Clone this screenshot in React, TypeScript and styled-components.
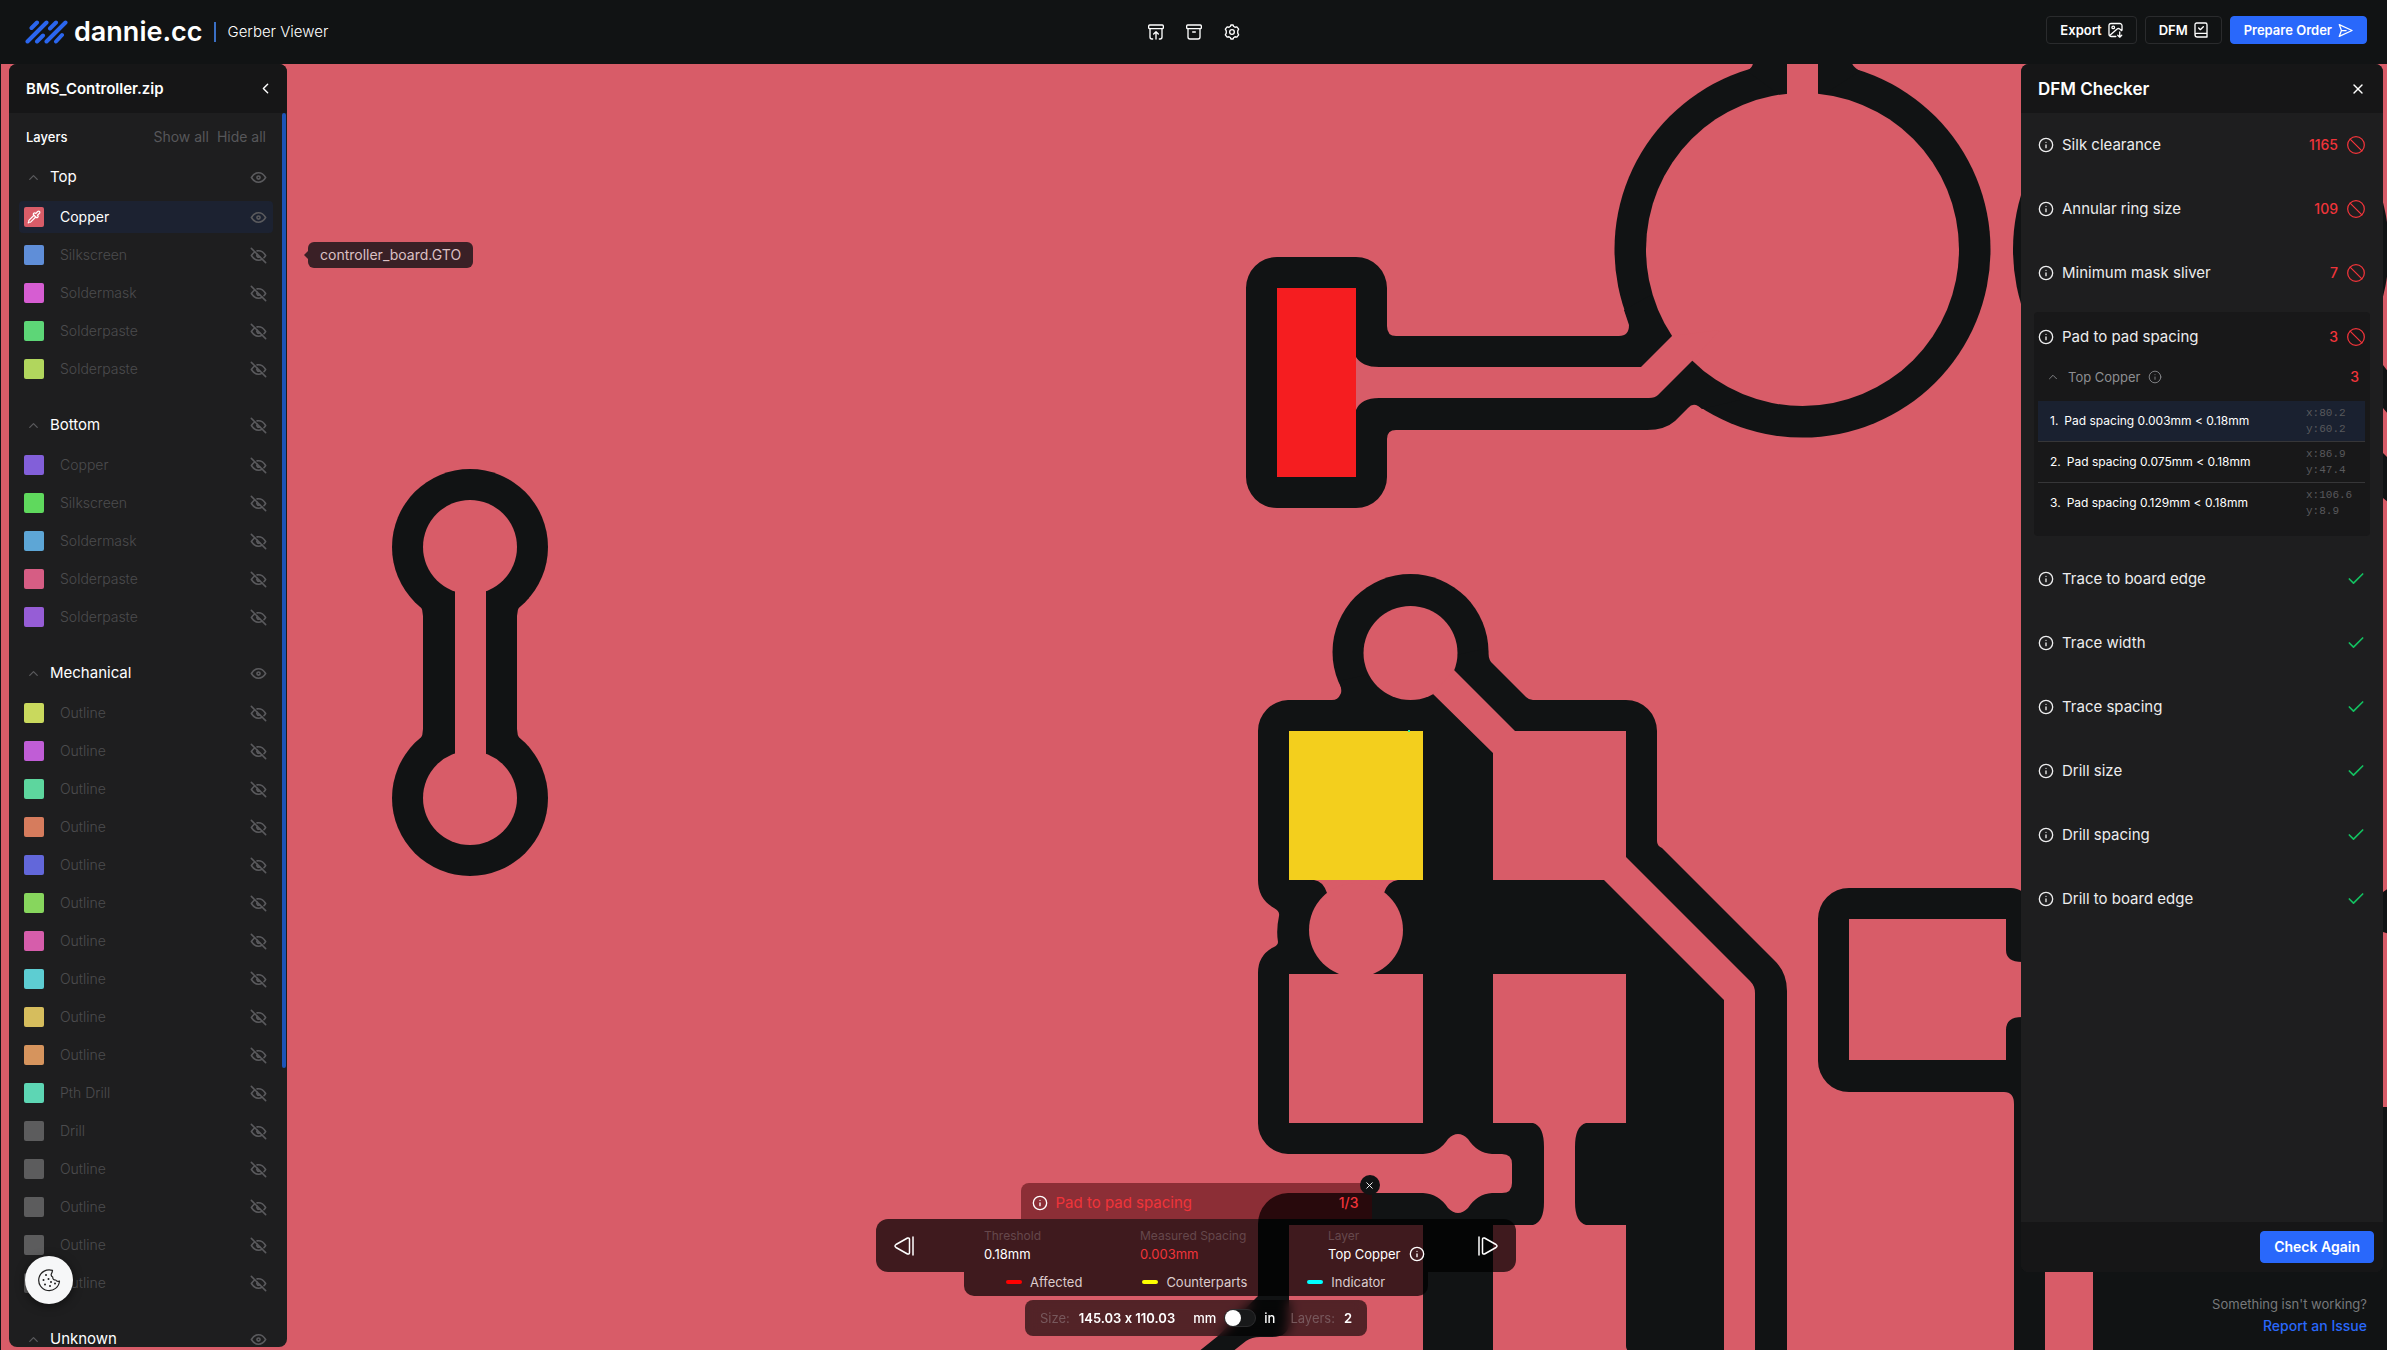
import React, { useState } from "react";
import styled, { createGlobalStyle } from "styled-components";
import { Ban, Check, ChevronLeft, ChevronUp, Info, Pipette, X } from "lucide-react";
import { TbEye, TbEyeOff } from "react-icons/tb";

const color = {
  ink: "#111314",
  copper: "#d85c68",
  panel: "#1e1e1f",
  panelHead: "#161617",
  blue: "#2968fb",
  red: "#f0343a",
  green: "#13c060",
  dim: "#4c4c4e",
};

const GlobalStyle = createGlobalStyle`
  *, *::before, *::after { box-sizing: border-box; }
  body {
    margin: 0;
    overflow: hidden;
    background: ${color.ink};
    color: #fff;
    font-family: Inter, "Liberation Sans", sans-serif;
    font-size: 14px;
    font-feature-settings: "calt" 0;
    line-height: 20px;
  }
  button {
    margin: 0;
    padding: 0;
    border: 0;
    background: none;
    color: inherit;
    font: inherit;
    cursor: pointer;
  }
  h1, h2, h3, p, ul, ol, dl, dd { margin: 0; padding: 0; font: inherit; }
  ul, ol { list-style: none; }
  svg { display: block; flex: none; }
`;

const Page = styled.div`
  display: grid;
  grid-template-rows: 64px minmax(0, 1fr);
  height: 100vh;
`;

/* ---------- top bar ---------- */

const TopBar = styled.header`
  display: grid;
  grid-template-columns: 1fr auto 1fr;
  align-items: center;
  padding: 0 20px;
  background: ${color.ink};
`;

const Brand = styled.a`
  display: flex;
  align-items: center;
  padding-left: 5px;
  color: #fff;
  text-decoration: none;
`;

const BrandName = styled.span`
  margin-left: 6px;
  font-size: 27px;
  line-height: 32px;
  font-weight: 600;
`;

const Product = styled.span`
  margin-left: 11px;
  padding-left: 12px;
  border-left: 2px solid #3a6fc4;
  font-size: 15px;
  font-weight: 300;
`;

const ToolGroup = styled.nav`
  display: flex;
  gap: 22px;
`;

const Actions = styled.div`
  display: flex;
  justify-content: flex-end;
  gap: 8px;
  padding-bottom: 4px;
`;

const ActionButton = styled.button<{ $primary?: boolean; $large?: boolean }>`
  display: flex;
  align-items: center;
  gap: 6px;
  height: ${(p) => (p.$large ? 32 : 28)}px;
  padding: 0 13px;
  border: 1px solid ${(p) => (p.$primary ? color.blue : "#2a2b2d")};
  border-radius: 4px;
  background: ${(p) => (p.$primary ? color.blue : "transparent")};
  font-size: ${(p) => (p.$large ? 14 : 13)}px;
  font-weight: 600;
`;

/* ---------- work area ---------- */

const Workspace = styled.main`
  display: grid;
  min-height: 0;
  overflow: hidden;
  & > * { grid-area: 1 / 1; }
`;

const Board = styled.svg`
  width: 100%;
  height: 100%;
  min-height: 0;
`;

const Panel = styled.aside`
  z-index: 1;
  display: grid;
  grid-template-rows: 49px minmax(0, 1fr);
  min-height: 0;
  overflow: hidden;
  border-radius: 8px;
  background: ${color.panel};
`;

const LayerPanel = styled(Panel)`
  justify-self: start;
  width: 278px;
  margin: 0 0 3px 9px;
`;

const PanelHead = styled.div<{ $narrow?: boolean }>`
  display: flex;
  align-items: center;
  justify-content: space-between;
  padding: 0 ${(p) => (p.$narrow ? 13 : 17)}px 0 17px;
  background: ${color.panelHead};
`;

const PanelTitle = styled.h2<{ $large?: boolean }>`
  font-size: ${(p) => (p.$large ? 17 : 15)}px;
  font-weight: 600;
`;

const ScrollArea = styled.div`
  display: grid;
  grid-template-columns: minmax(0, 1fr) 5px;
  min-height: 0;
`;

const ScrollThumb = styled.div`
  width: 4px;
  height: 955px;
  border-radius: 2px;
  background: #1d54b8;
`;

const LayerList = styled.div`
  display: flex;
  flex-direction: column;
  gap: 22px;
  min-height: 0;
  overflow: hidden;
  padding: 14px 9px 0 10px;
`;

const LayerTools = styled.div`
  display: flex;
  align-items: center;
  gap: 8px;
  height: 20px;
  margin-bottom: -10px;
  padding: 0 7px;
`;

const LayersTitle = styled.h3`
  flex: 1;
  font-size: 13px;
  font-weight: 500;
`;

const QuietButton = styled.button`
  color: #57575a;
`;

const GroupHead = styled.div`
  display: flex;
  align-items: center;
  height: 36px;
  padding: 0 5px 0 7px;
  margin-bottom: 6px;
`;

const GroupToggle = styled.button`
  display: flex;
  flex: 1;
  align-items: center;
  gap: 9px;
  font-size: 15px;
  svg { color: #5a5a5d; }
`;

const Rows = styled.ul`
  display: flex;
  flex-direction: column;
  gap: 6px;
`;

const Row = styled.li<{ $active: boolean }>`
  display: flex;
  align-items: center;
  gap: 16px;
  height: 32px;
  padding: 0 5px;
  border-radius: 4px;
  background: ${(p) => (p.$active ? "#1c2231" : "transparent")};
  color: ${(p) => (p.$active ? "#fff" : color.dim)};
  font-weight: ${(p) => (p.$active ? 400 : 300)};
`;

const Swatch = styled.button<{ $fill: string }>`
  display: grid;
  place-items: center;
  width: 20px;
  height: 20px;
  border-radius: 2px;
  background: ${(p) => p.$fill};
`;

const RowName = styled.span`
  flex: 1;
`;

const EyeButton = styled.button`
  color: #5a5a5d;
`;

const FileTip = styled.div`
  z-index: 1;
  justify-self: start;
  align-self: start;
  display: flex;
  align-items: center;
  height: 26px;
  margin: 178px 0 0 308px;
  padding: 0 12px;
  border-radius: 6px;
  background: #3a2026;
  color: #dcc0c4;
  position: relative;
  &::before {
    content: "";
    position: absolute;
    left: -4px;
    top: 9px;
    border: 4px solid transparent;
    border-left-width: 0;
    border-right-color: #3a2026;
  }
`;

const CookieButton = styled.button`
  z-index: 2;
  justify-self: start;
  align-self: end;
  display: grid;
  place-items: center;
  width: 48px;
  height: 48px;
  margin: 0 0 46px 25px;
  border-radius: 50%;
  background: #f6f7f8;
  color: #222;
  box-shadow: 0 2px 10px rgba(0, 0, 0, 0.5);
`;

/* ---------- DFM panel ---------- */

const RightColumn = styled.div`
  z-index: 1;
  justify-self: end;
  display: grid;
  grid-template-rows: minmax(0, 1fr) 78px;
  width: 362px;
  min-height: 0;
  margin-right: 4px;
`;

const DfmPanel = styled(Panel)`
  grid-template-rows: 49px minmax(0, 1fr) 50px;
`;

const Checks = styled.ul`
  display: flex;
  flex-direction: column;
  gap: 14px;
  padding: 7px 13px;
`;

const CheckItem = styled.li<{ $open: boolean }>`
  padding-bottom: ${(p) => (p.$open ? 12 : 0)}px;
  margin-bottom: ${(p) => (p.$open ? 4 : 0)}px;
  border-radius: 4px;
  background: ${(p) => (p.$open ? "#181819" : "transparent")};
`;

const CheckHead = styled.button`
  display: flex;
  align-items: center;
  gap: 8px;
  width: 100%;
  height: 50px;
  padding: 0 4px;
  color: #ededee;
  font-size: 15px;
  text-align: left;
`;

const CheckName = styled.span`
  flex: 1;
`;

const Count = styled.span`
  color: ${color.red};
  font-size: 14px;
  font-weight: 500;
`;

const Status = styled.span<{ $ok: boolean }>`
  color: ${(p) => (p.$ok ? color.green : color.red)};
`;

const SubHead = styled.button`
  display: flex;
  align-items: center;
  gap: 8px;
  width: 100%;
  height: 30px;
  padding: 0 11px 0 12px;
  color: #8d8e91;
  font-size: 13px;
  text-align: left;
  ${Count} { flex: 1; text-align: right; }
`;

const Violations = styled.ol`
  padding: 9px 5px 0 4px;
`;

const Violation = styled.li<{ $active: boolean }>`
  display: flex;
  align-items: center;
  gap: 6px;
  height: 41px;
  padding: 0 0 0 12px;
  border-bottom: 1px solid #363638;
  background: ${(p) => (p.$active ? "#1a2130" : "transparent")};
  font-size: 12px;
  &:last-child { border-bottom-color: transparent; }
`;

const ViolationText = styled.span`
  flex: 1;
`;

const Coords = styled.span`
  width: 59px;
  color: #58595c;
  font-family: "Liberation Mono", monospace;
  font-size: 11px;
  line-height: 16px;
`;

const PanelFoot = styled.div`
  display: flex;
  align-items: center;
  justify-content: flex-end;
  padding-right: 9px;
  background: ${color.panelHead};
`;

const Help = styled.div`
  padding: 21px 16px 0 0;
  line-height: 22px;
  text-align: right;
  p { color: #77797b; font-size: 13px; }
  a { color: ${color.blue}; font-weight: 500; text-decoration: none; }
`;

/* ---------- bottom readouts ---------- */

const Hud = styled.section`
  z-index: 1;
  justify-self: center;
  align-self: end;
  display: flex;
  flex-direction: column;
  align-items: center;
  margin: 0 0 14px 5px;
`;

const HudTitle = styled.div`
  position: relative;
  display: flex;
  align-items: center;
  gap: 8px;
  width: 351px;
  height: 36px;
  padding: 3px 13px 0 11px;
  border-radius: 8px 8px 0 0;
  background: rgba(64, 0, 4, 0.5);
  font-size: 15px;
`;

const HudName = styled.h2`
  flex: 1;
  color: ${color.red};
`;

const CloseBadge = styled.button`
  position: absolute;
  right: -8px;
  top: -8px;
  display: grid;
  place-items: center;
  width: 20px;
  height: 20px;
  border-radius: 50%;
  background: ${color.ink};
`;

const HudNav = styled.div`
  display: flex;
  align-items: center;
  gap: 51px;
  width: 640px;
  height: 53px;
  padding: 0 18px;
  border-radius: 12px;
  background: rgba(0, 0, 0, 0.71);
`;

const Facts = styled.dl`
  display: grid;
  grid-template-columns: 156px 188px 1fr;
  flex: 1;
  padding: 0 0 2px 19px;
  font-size: 13px;
  line-height: 18px;
`;

const FactName = styled.dt`
  color: #66484c;
  font-size: 12px;
`;

const FactValue = styled.dd<{ $alert?: boolean }>`
  display: flex;
  align-items: center;
  gap: 9px;
  white-space: nowrap;
  color: ${(p) => (p.$alert ? color.red : "#fff")};
`;

const Legend = styled.ul`
  display: flex;
  align-items: center;
  gap: 60px;
  width: 464px;
  height: 24px;
  padding: 0 0 4px 42px;
  border-radius: 0 0 10px 10px;
  background: rgba(0, 0, 0, 0.71);
  color: #dccccd;
  font-size: 13px;
`;

const LegendItem = styled.li<{ $mark: string }>`
  display: flex;
  align-items: center;
  gap: 8px;
  &::before {
    content: "";
    width: 16px;
    height: 4px;
    border-radius: 2px;
    background: ${(p) => p.$mark};
  }
`;

const StatusBar = styled.div`
  display: flex;
  align-items: center;
  gap: 9px;
  height: 36px;
  margin-top: 4px;
  padding: 0 15px;
  border-radius: 8px;
  background: rgba(0, 0, 0, 0.62);
  backdrop-filter: blur(6px);
  font-size: 13px;
`;

const StatusLabel = styled.span`
  color: #77585c;
`;

const Dimensions = styled.strong`
  margin-right: 9px;
  font-weight: 600;
`;

const StatusValue = styled.strong`
  font-weight: 600;
`;

const UnitLabel = styled.label`
  display: flex;
  align-items: center;
  gap: 8px;
  margin-right: 6px;
  font-weight: 500;
`;

const UnitSwitch = styled.input`
  appearance: none;
  display: flex;
  width: 32px;
  height: 18px;
  margin: 0;
  border: 1px solid #2c2c2e;
  border-radius: 9px;
  background: #18191a;
  &::before {
    content: "";
    width: 16px;
    height: 16px;
    border-radius: 50%;
    background: #fff;
  }
  &:checked { justify-content: flex-end; }
`;

/* ---------- drawings ---------- */

const BrandMark = () => (
  <svg width="43" height="24" viewBox="0 0 43 24" fill="none" stroke="#2b66ee" strokeWidth="4" strokeLinecap="round">
    <path d="M6.500 8 12 2.500M2.500 21.500 21.500 2.500M12 21.500 18 15.500M25 8.500 31 2.500M21.500 21.500 40.500 2.500M31 21.500 37 15" />
  </svg>
);

const strokeIcon = {
  fill: "none",
  stroke: "currentColor",
  strokeWidth: 2,
  strokeLinecap: "round" as const,
  strokeLinejoin: "round" as const,
};

const ArchiveUp = () => (
  <svg width="16" height="16" viewBox="0 0 24 24" {...strokeIcon}>
    <rect x="1" y="1.500" width="22" height="5.500" rx="1.500" />
    <path d="M3 7v12.500a3 3 0 0 0 3 3h1M21 7v12.500a3 3 0 0 1-3 3h-1M12 22.500V12M8.500 15l3.500-3.500 3.500 3.500" />
  </svg>
);

const ArchiveBox = () => (
  <svg width="16" height="16" viewBox="0 0 24 24" {...strokeIcon}>
    <rect x="1" y="1.500" width="22" height="5.500" rx="1.500" />
    <path d="M3 7v12.500a3 3 0 0 0 3 3h12a3 3 0 0 0 3-3V7M10 12h4" />
  </svg>
);

const Gear = () => (
  <svg width="16" height="16" viewBox="0 0 24 24" {...strokeIcon}>
    <path d="M9.700 3.300 10.300 1.500h3.400l.6 1.800 2.200 1.600 2.800-.5 2.700 3.400-1.400 2.500v3.400l1.400 2.500-2.700 3.400-2.800-.5-2.200 1.600-.6 1.800h-3.400l-.6-1.800-2.200-1.600-2.800.5L2 16.200l1.400-2.500v-3.400L2 7.800l2.700-3.400 2.800.5z" />
    <circle cx="12" cy="12" r="3.500" />
  </svg>
);

const ExportIcon = () => (
  <svg width="15" height="16" viewBox="0 0 23 24" {...strokeIcon}>
    <path d="M12 22H5a3.500 3.500 0 0 1-3.500-3.500v-13A3.500 3.500 0 0 1 5 2h13a3.500 3.500 0 0 1 3.500 3.500V12M3 20 14 10.500q2-1.500 4 0l3 2.500M18 15v8M15 20l3 3 3-3" />
    <circle cx="8" cy="8" r="2" />
  </svg>
);

const ReportIcon = () => (
  <svg width="14" height="16" viewBox="0 0 21 24" {...strokeIcon}>
    <path d="M1.500 19V4a2.500 2.500 0 0 1 2.500-2.500h13A2.500 2.500 0 0 1 19.500 4v18.500H5A3.500 3.500 0 0 1 1.500 19 2.500 2.500 0 0 1 4 17h15M7 9l2.500 2.500L14 7" />
  </svg>
);

const SendIcon = () => (
  <svg width="15" height="15" viewBox="0 0 24 24" {...strokeIcon}>
    <path d="M2 2.500 22.500 12 2 21.500 5.500 12zM5.500 12H13" />
  </svg>
);

const StepIcon = ({ back }: { back?: boolean }) => (
  <svg width="20" height="20" viewBox="0 0 20 20" {...strokeIcon} strokeWidth={1.500}>
    <path
      d={
        back
          ? "M19 1v18M15.500 3.500v13q0 2-2 1.500L2 11.500q-2-1.500 0-3L13.500 2q2-.5 2 1.500z"
          : "M1 1v18M4.500 3.500v13q0 2 2 1.500l11.500-6.500q2-1.500 0-3L6.500 2q-2-.5-2 1.500z"
      }
    />
  </svg>
);

const CookieIcon = () => (
  <svg width="24" height="24" viewBox="0 0 24 24" {...strokeIcon} strokeWidth={1.200}>
    <path d="M15.500 2.400A10.400 10.400 0 1 0 22.500 13q-2.500 1.200-3.800-1-3 .2-3-3-2-1-1.400-3 1-1.700 1.200-3.600z" />
    <path
      strokeWidth="2"
      d="M9 7h.01M6.500 12h.01M11.500 11h.01M8 16.500h.01M13 18h.01M14 14h.01M18 15.500h.01"
    />
  </svg>
);

const Artwork = () => (
  <Board aria-label="Top copper artwork">
    <rect width="100%" height="100%" fill={color.copper} />
    <g transform="translate(0 -64)">
      <g fill={color.ink}>
        <rect width="1" height="1350" />
        {/* dumbbell clearance */}
        <circle cx="470" cy="547" r="78" />
        <circle cx="470" cy="798" r="78" />
        <path d="M412 598q11 6 11 18V729q0 12-11 18H529q-12-6-12-18V616q0-12 12-18z" />
        {/* round pad clearance with its trace */}
        <circle cx="1802.500" cy="249.500" r="188" />
        <circle cx="2201" cy="249.500" r="188" />
        <path d="M1753 60q1 7-6 11L1800 110 1860 71q-8-4-9-11z" />
        <path d="M1277 257h79a31 31 0 0 1 31 31V326q0 10 9 10H1619q10 0 10-11L1624 310 1660 290 1740 400 1702 409q-8-8-14-1L1675 421Q1665 430 1647 430H1396q-9 0-9 9V477a31 31 0 0 1-31 31h-79a31 31 0 0 1-31-31V288a31 31 0 0 1 31-31z" />
        {/* pad cluster clearance */}
        <circle cx="1410.500" cy="652" r="78" />
        <path d="M1339 681q4 11 1 14-2 5-8 5H1288a31 31 0 0 0-30 31V880q0 19 16 28 6 3 5 8-3 14-1 26 0 3-4 5-16 8-16 26V1122a31 31 0 0 0 30 32H1423q16-1 25-15 10-10 20 0 9 14 24 15h10q10 0 10 10v19q0 10-10 10h-10q-15 1-24 15-10 10-20 0-9-14-25-15H1288a31 31 0 0 0-30 32V1296L1218 1336 1198 1352H1232L1246 1341Q1252 1337 1260 1337H1272Q1289 1337 1289 1322V1225H1423V1352H1493V1225H1533Q1544 1222 1544 1202V1147Q1544 1126 1533 1123H1586Q1575 1126 1575 1147V1202Q1575 1222 1586 1225H1626V1346q0 5 5 6H1787V991Q1787 972 1774 960L1662 848Q1657 846 1657 841V731a31 31 0 0 0-31-31H1533q-4 0-7-3L1491 662Q1488 658 1488 648z" />
        {/* square pad clearance */}
        <path d="M1849 888H2011q6 0 12 4V1352H2014V1104q0-12-10-12H1849a31 31 0 0 1-31-31V919a31 31 0 0 1 31-31z" />
        <path d="M2014 1104H2400V1352H2014z" />
        <path d="M2383 365l6 8v42l-6-7zM2383 453l6 6v44l-6-5zM2383 892l6-4v46l-6-2z" />
      </g>

      <g fill={color.copper}>
        <circle cx="470" cy="547" r="47" />
        <circle cx="470" cy="798" r="47" />
        <rect x="455" y="580" width="31" height="190" />
        <circle cx="1802.500" cy="249.500" r="156.500" />
        <rect x="1787" y="60" width="31" height="60" />
        <path d="M1356 357Q1362 367 1379 367H1641L1672 336 1720 330 1692 361 1658 395Q1655 398 1649 398H1379Q1361 398 1356 410z" />
        <circle cx="1410.500" cy="653" r="47" />
        <path d="M1454 670 1515 731H1626V857L1750 981Q1755 986 1755 993V1352H1724V1000L1604 880H1493V753L1433 694z" />
        <path d="M1314 880H1398Q1388 881 1384 893L1370 905H1341L1327 893Q1323 881 1314 880z" />
        <circle cx="1356" cy="930" r="47" />
        <rect x="1289" y="974" width="134" height="149" />
        <path d="M1493 974h133v149H1493z" />
        <rect x="1849" y="919" width="157" height="141" />
        <path d="M2000 962Q2006 950 2006 950 2006 962 2022 962V1017Q2006 1017 2006 1030L2000 1017z" />
        <rect x="2045" y="1260" width="48" height="92" />
        <rect x="2383" y="940" width="8" height="167" />
      </g>
      <rect x="1277" y="288" width="79" height="189" fill="#f51d20" />
      <rect x="1289" y="731" width="134" height="149" fill="#f3cf1d" />
      <rect x="1408" y="730" width="2" height="2" fill="#35f0a0" />
    </g>
  </Board>
);

/* ---------- data ---------- */

type Layer = [name: string, fill: string];

const outlineFills = ["#c9d95d", "#c05dd6", "#5dd69e", "#d67c5d", "#6267da", "#87d65d", "#d65dab", "#5dcdd2", "#d6bd5d", "#d6945d"];

const groups: { name: string; visible: boolean; layers: Layer[] }[] = [
  {
    name: "Top",
    visible: true,
    layers: [
      ["Copper", "#d85c68"],
      ["Silkscreen", "#5f8ed8"],
      ["Soldermask", "#d65dd2"],
      ["Solderpaste", "#5dd677"],
      ["Solderpaste", "#b1d65d"],
    ],
  },
  {
    name: "Bottom",
    visible: false,
    layers: [
      ["Copper", "#825fd9"],
      ["Silkscreen", "#5fd95d"],
      ["Soldermask", "#5da6d6"],
      ["Solderpaste", "#d65d84"],
      ["Solderpaste", "#965dd6"],
    ],
  },
  {
    name: "Mechanical",
    visible: true,
    layers: [
      ...outlineFills.map((fill): Layer => ["Outline", fill]),
      ["Pth Drill", "#5dd6b4"],
      ["Drill", "#5c5c5d"],
      ["Outline", "#5c5c5d"],
      ["Outline", "#5c5c5d"],
      ["Outline", "#5c5c5d"],
      ["Outline", "#5c5c5d"],
    ],
  },
  { name: "Unknown", visible: true, layers: [] },
];

const checks = [
  { name: "Silk clearance", count: 1165 },
  { name: "Annular ring size", count: 109 },
  { name: "Minimum mask sliver", count: 7 },
  { name: "Pad to pad spacing", count: 3 },
  { name: "Trace to board edge", count: 0 },
  { name: "Trace width", count: 0 },
  { name: "Trace spacing", count: 0 },
  { name: "Drill size", count: 0 },
  { name: "Drill spacing", count: 0 },
  { name: "Drill to board edge", count: 0 },
];

const violations = [
  { gap: "0.003mm", x: "80.2", y: "60.2" },
  { gap: "0.075mm", x: "86.9", y: "47.4" },
  { gap: "0.129mm", x: "106.6", y: "8.9" },
];

const Eye = ({ on, label }: { on: boolean; label: string }) => (
  <EyeButton aria-label={`Toggle ${label}`}>{on ? <TbEye size={19} /> : <TbEyeOff size={19} />}</EyeButton>
);

export default function App() {
  const [inches, setInches] = useState(false);
  const openCheck = "Pad to pad spacing";

  return (
    <>
      <GlobalStyle />
      <Page>
        <TopBar>
          <Brand href="#">
            <BrandMark />
            <BrandName>dannie.cc</BrandName>
            <Product>Gerber Viewer</Product>
          </Brand>
          <ToolGroup aria-label="Project">
            <button aria-label="Upload archive"><ArchiveUp /></button>
            <button aria-label="Archive"><ArchiveBox /></button>
            <button aria-label="Settings"><Gear /></button>
          </ToolGroup>
          <Actions>
            <ActionButton>Export <ExportIcon /></ActionButton>
            <ActionButton>DFM <ReportIcon /></ActionButton>
            <ActionButton $primary>Prepare Order <SendIcon /></ActionButton>
          </Actions>
        </TopBar>

        <Workspace>
          <Artwork />

          <LayerPanel>
            <PanelHead $narrow>
              <PanelTitle>BMS_Controller.zip</PanelTitle>
              <button aria-label="Collapse layers"><ChevronLeft size={17} strokeWidth={2} /></button>
            </PanelHead>
            <ScrollArea>
              <LayerList>
                <LayerTools>
                  <LayersTitle>Layers</LayersTitle>
                  <QuietButton>Show all</QuietButton>
                  <QuietButton>Hide all</QuietButton>
                </LayerTools>
                {groups.map((group) => (
                  <section key={group.name}>
                    <GroupHead>
                      <GroupToggle>
                        <ChevronUp size={15} /> {group.name}
                      </GroupToggle>
                      <Eye on={group.visible} label={group.name} />
                    </GroupHead>
                    <Rows>
                      {group.layers.map(([name, fill], i) => {
                        const active = group.name === "Top" && i === 0;
                        return (
                          <Row key={i} $active={active}>
                            <Swatch $fill={fill} aria-label={`${name} colour`}>
                              {active && <Pipette size={14} />}
                            </Swatch>
                            <RowName>{name}</RowName>
                            <Eye on={active} label={name} />
                          </Row>
                        );
                      })}
                    </Rows>
                  </section>
                ))}
              </LayerList>
              <ScrollThumb />
            </ScrollArea>
          </LayerPanel>

          <FileTip role="tooltip">controller_board.GTO</FileTip>
          <CookieButton aria-label="Cookie settings"><CookieIcon /></CookieButton>

          <Hud aria-label="Selected violation">
            <HudTitle>
              <Info size={16} />
              <HudName>Pad to pad spacing</HudName>
              <Count>1/3</Count>
              <CloseBadge aria-label="Close"><X size={11} /></CloseBadge>
            </HudTitle>
            <HudNav>
              <button aria-label="Previous"><StepIcon back /></button>
              <Facts>
                <div>
                  <FactName>Threshold</FactName>
                  <FactValue>0.18mm</FactValue>
                </div>
                <div>
                  <FactName>Measured Spacing</FactName>
                  <FactValue $alert>0.003mm</FactValue>
                </div>
                <div>
                  <FactName>Layer</FactName>
                  <FactValue>Top Copper <Info size={16} /></FactValue>
                </div>
              </Facts>
              <button aria-label="Next"><StepIcon /></button>
            </HudNav>
            <Legend>
              <LegendItem $mark="#ff0000">Affected</LegendItem>
              <LegendItem $mark="#ffff00">Counterparts</LegendItem>
              <LegendItem $mark="#00ffff">Indicator</LegendItem>
            </Legend>
            <StatusBar>
              <StatusLabel>Size:</StatusLabel>
              <Dimensions>145.03 x 110.03</Dimensions>
              <UnitLabel>
                mm
                <UnitSwitch type="checkbox" role="switch" checked={inches} onChange={(e) => setInches(e.target.checked)} />
                in
              </UnitLabel>
              <StatusLabel>Layers:</StatusLabel>
              <StatusValue>2</StatusValue>
            </StatusBar>
          </Hud>

          <RightColumn>
            <DfmPanel>
              <PanelHead>
                <PanelTitle $large>DFM Checker</PanelTitle>
                <button aria-label="Close checker"><X size={16} /></button>
              </PanelHead>
              <Checks>
                {checks.map(({ name, count }) => (
                  <CheckItem key={name} $open={name === openCheck}>
                    <CheckHead>
                      <Info size={16} />
                      <CheckName>{name}</CheckName>
                      {count > 0 && <Count>{count}</Count>}
                      <Status $ok={count === 0}>
                        {count > 0 ? <Ban size={20} strokeWidth={1.500} /> : <Check size={20} strokeWidth={2} />}
                      </Status>
                    </CheckHead>
                    {name === openCheck && (
                      <>
                        <SubHead>
                          <ChevronUp size={14} strokeWidth={1.500} /> Top Copper <Info size={14} strokeWidth={1.500} />
                          <Count>3</Count>
                        </SubHead>
                        <Violations>
                          {violations.map((v, i) => (
                            <Violation key={v.gap} $active={i === 0}>
                              <span>{i + 1}.</span>
                              <ViolationText>Pad spacing {v.gap} &lt; 0.18mm</ViolationText>
                              <Coords>
                                x:{v.x}
                                <br />
                                y:{v.y}
                              </Coords>
                            </Violation>
                          ))}
                        </Violations>
                      </>
                    )}
                  </CheckItem>
                ))}
              </Checks>
              <PanelFoot>
                <ActionButton $primary $large>Check Again</ActionButton>
              </PanelFoot>
            </DfmPanel>
            <Help>
              <p>Something isn't working?</p>
              <a href="#report">Report an Issue</a>
            </Help>
          </RightColumn>
        </Workspace>
      </Page>
    </>
  );
}
